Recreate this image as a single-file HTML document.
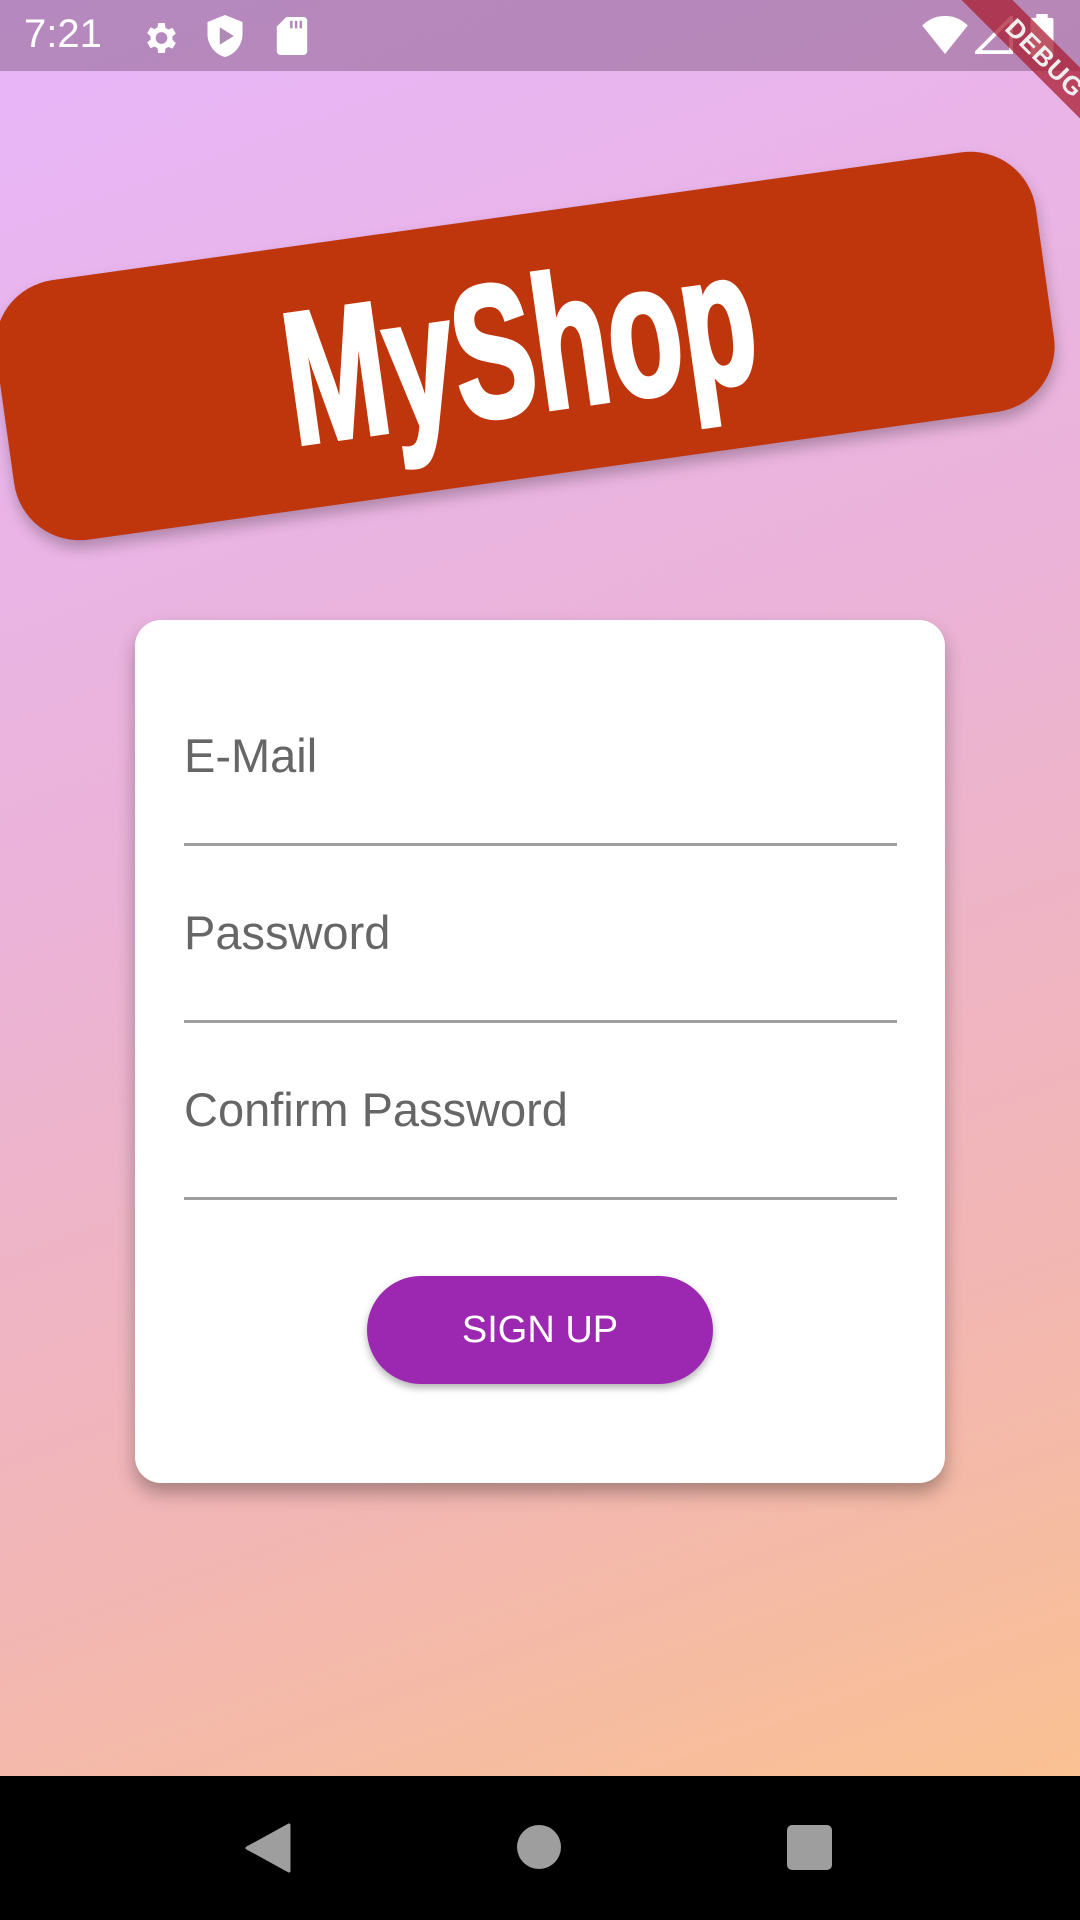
<!DOCTYPE html>
<html><head><meta charset="utf-8"><style>
html,body{margin:0;padding:0}
body{width:1080px;height:1920px;position:relative;overflow:hidden;font-family:"Liberation Sans",sans-serif;
background:linear-gradient(160deg,#e8b6fa 0%,#ebb3d8 40%,#f2b6b4 70%,#fcc48a 100%);}
.status{position:absolute;left:0;top:0;width:1080px;height:71px;background:rgba(120,80,120,0.45);}
.time{position:absolute;left:24px;top:12px;color:#fff;font-size:40px;}
.nav{position:absolute;left:0;top:1776px;width:1080px;height:144px;background:#000;}
.banner{position:absolute;left:0;top:215px;width:1050px;height:262px;background:#bf360c;border-radius:66px;transform:rotate(-8deg);box-shadow:0 8px 14px rgba(0,0,0,0.25);}
.title{position:absolute;left:-5px;top:222px;width:1050px;text-align:center;transform:rotate(-8deg);color:#fff;font-weight:bold;font-size:184px;line-height:250px;-webkit-text-stroke:5px #fff;}
.title span{display:inline-block;transform:scaleX(0.66) scaleY(1.02)}
.card{position:absolute;left:135px;top:620px;width:810px;height:863px;background:#fff;border-radius:26px;box-shadow:0 10px 18px rgba(0,0,0,0.3);}
.lbl{position:absolute;left:49px;font-size:47px;color:#666;}
.line{position:absolute;left:49px;width:713px;height:3px;background:#9e9e9e;}
.btn{position:absolute;left:232px;top:656px;width:346px;height:108px;border-radius:54px;background:#9c27b0;color:#fff;font-size:38px;text-align:center;line-height:108px;box-shadow:0 4px 8px rgba(0,0,0,0.3);}
</style></head><body>
<div class="status">
<div class="time">7:21</div>
<svg style="position:absolute;left:140px;top:18px" width="40" height="40" viewBox="0 0 24 24"><path fill="#fff" d="M19.4 13c.04-.33.06-.66.06-1s-.02-.67-.06-1l2.1-1.65-2-3.46-2.48 1a7.3 7.3 0 0 0-1.73-1L14.9 3h-4l-.38 2.65c-.63.26-1.2.6-1.73 1l-2.48-1-2 3.46L6.4 11a7.9 7.9 0 0 0 0 2l-2.1 1.65 2 3.46 2.48-1c.53.4 1.1.74 1.73 1L10.9 21h4l.38-2.65c.63-.26 1.2-.6 1.73-1l2.48 1 2-3.46zM12.9 15.5a3.5 3.5 0 1 1 0-7 3.5 3.5 0 0 1 0 7z"/></svg>
<svg style="position:absolute;left:207px;top:15px" width="36" height="42" viewBox="0 0 20 24"><path fill="#fff" d="M10 0L0 4v7c0 6 4.3 11.6 10 13 5.7-1.4 10-7 10-13V4z"/><path fill="#ae8ab4" d="M7 7v10l8-5z"/></svg>
<svg style="position:absolute;left:276px;top:17px" width="32" height="38" viewBox="0 0 16 20"><path fill="#fff" d="M5 0h9a2 2 0 0 1 2 2v16a2 2 0 0 1-2 2H2a2 2 0 0 1-2-2V5z"/><path fill="#ae8ab4" d="M7 2h1.3v4H7zM9.5 2h1.3v4H9.5zM12 2h1.3v4H12z"/></svg>
<svg style="position:absolute;left:922px;top:16px" width="46" height="38" viewBox="0 0 24 20"><path fill="#fff" d="M12 20L0 5C3 2 7 0 12 0s9 2 12 5z"/></svg>
<svg style="position:absolute;left:975px;top:16px" width="38" height="38" viewBox="0 0 20 20"><path fill="none" stroke="#fff" stroke-width="2" d="M19 1v18H1z"/></svg>
<svg style="position:absolute;left:1030px;top:14px" width="24" height="42" viewBox="0 0 12 22"><path fill="#fff" d="M3 0h6v2h2a1 1 0 0 1 1 1v18a1 1 0 0 1-1 1H1a1 1 0 0 1-1-1V3a1 1 0 0 1 1-1h2z"/></svg>
</div>
<div style="position:absolute;left:905px;top:40px;width:280px;height:36px;background:rgba(170,30,50,0.75);transform:rotate(45deg);color:#eee;font-weight:bold;font-size:26px;text-align:center;line-height:36px;letter-spacing:1px">DEBUG</div>
<div class="banner"></div>
<div class="title"><span>MyShop</span></div>
<div class="card">
<div class="lbl" style="top:108px">E-Mail</div>
<div class="line" style="top:223px"></div>
<div class="lbl" style="top:285px">Password</div>
<div class="line" style="top:400px"></div>
<div class="lbl" style="top:462px">Confirm Password</div>
<div class="line" style="top:577px"></div>
<div class="btn">SIGN UP</div>
</div>
<div class="nav">
<svg style="position:absolute;left:245px;top:47px" width="46" height="50" viewBox="0 0 46 50"><path fill="#9e9e9e" d="M44 2v46L2 25z" stroke="#9e9e9e" stroke-linejoin="round" stroke-width="3"/></svg>
<div style="position:absolute;left:517px;top:49px;width:44px;height:44px;border-radius:50%;background:#9e9e9e"></div>
<div style="position:absolute;left:787px;top:49px;width:45px;height:45px;border-radius:5px;background:#9e9e9e"></div>
</div>
</body></html>
